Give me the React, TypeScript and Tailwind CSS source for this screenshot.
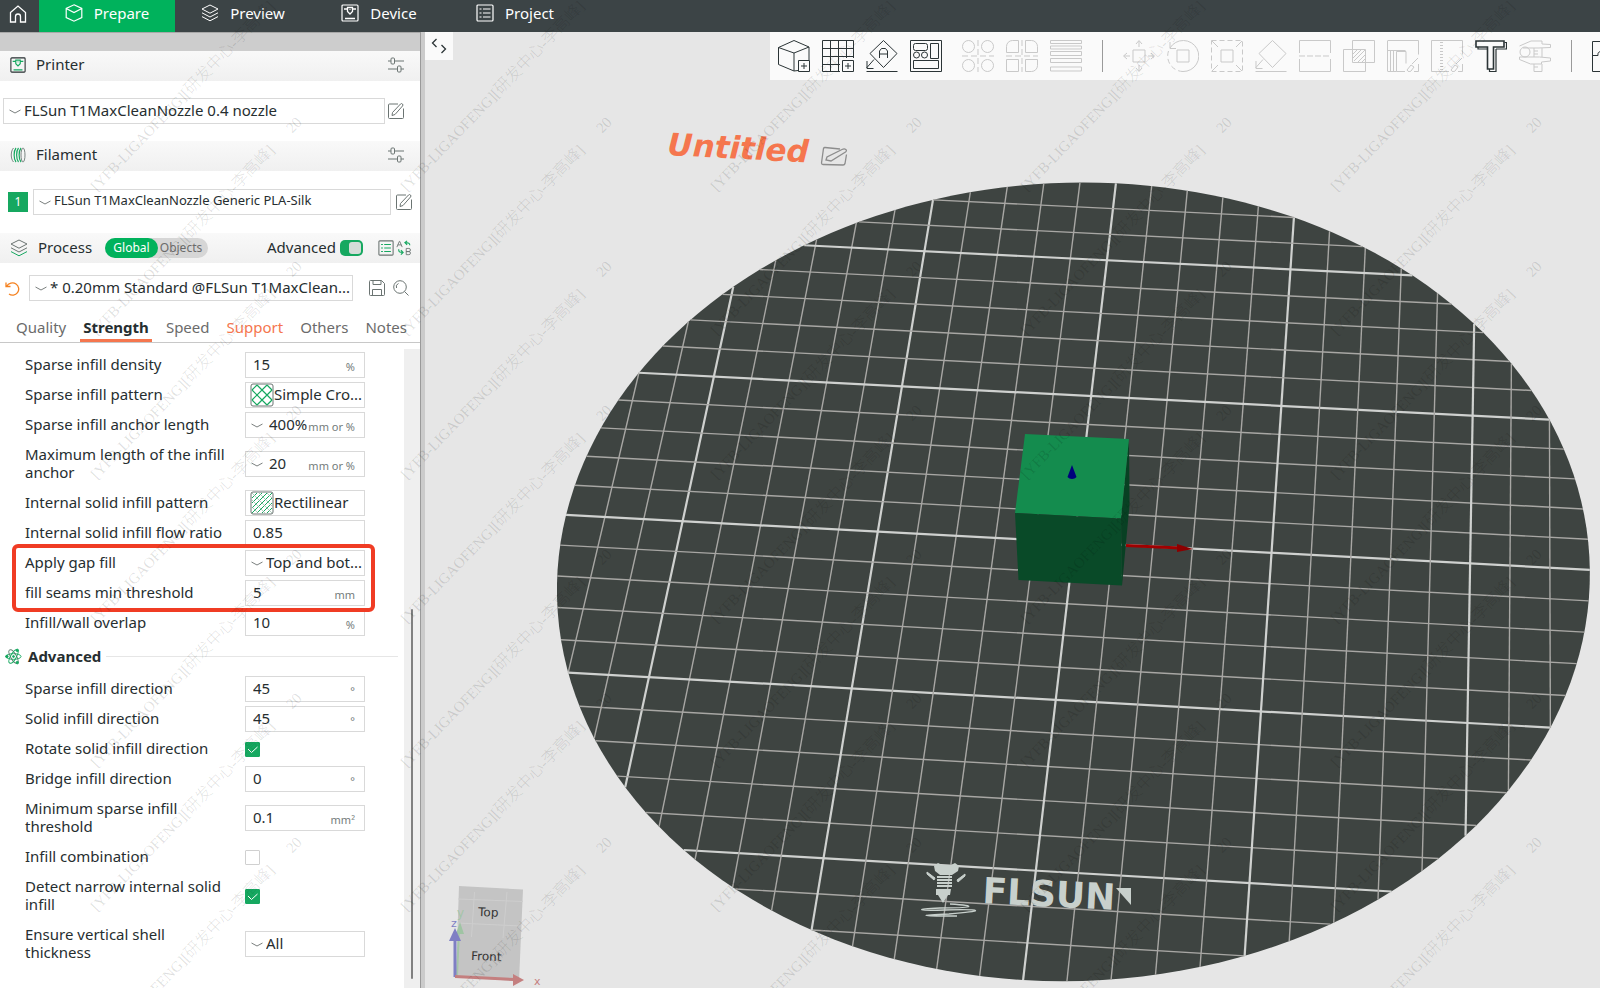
import { useState } from "react";
import type { ReactNode } from "react";

type IconProps = { size?: number; box?: number; className?: string; children: ReactNode };

function Icon({ size = 18, box = 18, className = "", children }: IconProps) {
  return (
    <svg
      width={size}
      height={size}
      viewBox={`0 0 ${box} ${box}`}
      fill="none"
      stroke="currentColor"
      aria-hidden="true"
      className={`shrink-0 ${className}`}
    >
      {children}
    </svg>
  );
}

function HomeIcon() {
  return (
    <Icon>
      <path d="M1.5 7.5 9 1l7.500 6.500V17h-5v-5.500a2.500 2.500 0 0 0-5 0V17h-5z" strokeWidth="1.300" />
    </Icon>
  );
}

function CubeIcon() {
  return (
    <Icon>
      <path d="M9 .8 16.800 4.500v9L9 17.200 1.200 13.500v-9zM1.200 4.500 9 8.500l7.800-4" strokeWidth="1.200" />
    </Icon>
  );
}

function LayersIcon({ accent = "currentColor" }: { accent?: string }) {
  return (
    <Icon>
      <path d="M9 1 17 5 9 9.200 1 5z" />
      <path d="m1 8.800 8 4.200 8-4.200" />
      <path d="m1 12.600 8 4.200 8-4.200" stroke={accent} />
    </Icon>
  );
}

function PrinterIcon({ accent = "currentColor", size = 18 }: { accent?: string; size?: number }) {
  return (
    <Icon size={size}>
      <rect x="1" y="1" width="16" height="16" rx="1" strokeWidth="1.200" />
      <path d="M3 5h3.500M11.500 5H15M6.500 3.500h5v4L9 10 6.500 7.500zM4 14.500h10" stroke={accent} strokeWidth="1.300" />
      <path d="M8.500 5.500h1" stroke={accent} />
    </Icon>
  );
}

function ListIcon({ accent = "currentColor", size = 18 }: { accent?: string; size?: number }) {
  return (
    <Icon size={size}>
      <rect x="1" y="1" width="16" height="16" rx="1" strokeWidth="1.200" />
      <path d="M3.500 5h2M3.500 9h2M3.500 13h2M7 5h7.500M7 9h7.500M7 13h7.500" stroke={accent} strokeWidth="1.200" />
    </Icon>
  );
}

function FilamentIcon() {
  return (
    <Icon size={16} box={16}>
      <path d="M3.500 1C.5 4 .5 12 3.500 15" stroke="#7a8582" />
      <path d="M6 1c-2.500 3-2.500 11 0 14M8.500 1C6 4 6 12 8.500 15M11 1c-2.500 3-2.500 11 0 14" stroke="#16a860" strokeWidth="1.200" />
      <ellipse cx="13" cy="8" rx="2" ry="7" stroke="#7a8582" />
    </Icon>
  );
}

function SlidersIcon() {
  return (
    <Icon size={16} box={16} className="text-[#6b7472]">
      <path d="M0 4h3M6.500 4H16M0 12h9.500M13 12h3" />
      <rect x="3" y="1" width="3.500" height="6" rx="1" />
      <rect x="9.500" y="9" width="3.500" height="6" rx="1" />
    </Icon>
  );
}

function EditIcon() {
  return (
    <Icon size={16} box={16} className="text-[#6b7472]">
      <path d="M10 1H1.500a1 1 0 0 0-1 1v12.500a1 1 0 0 0 1 1h13a1 1 0 0 0 1-1V5.500" />
      <path d="m4.500 9.500 8-8.500a1.400 1.400 0 0 1 2 2L7 11.500l-3 1z" />
    </Icon>
  );
}

function Chevron() {
  return (
    <svg width="12" height="5" viewBox="0 0 12 5" fill="none" stroke="#7a7f7e" aria-hidden="true" className="pointer-events-none shrink-0">
      <path d="M.5 1 6 4l5.500-3" />
    </svg>
  );
}

function NavTab({ icon, label, active = false }: { icon: ReactNode; label: string; active?: boolean }) {
  return (
    <button
      className={`flex w-[136px] items-center justify-center gap-[11px] pb-1.5 text-[15px] leading-5 text-white ${
        active ? "bg-[#00b25c]" : ""
      }`}
    >
      {icon}
      {label}
    </button>
  );
}

function TopBar() {
  return (
    <header className="flex h-8 bg-[#3c4446]">
      <button aria-label="Home" className="flex w-[39px] items-center justify-center pr-1 pb-1 text-white">
        <HomeIcon />
      </button>
      <NavTab icon={<CubeIcon />} label="Prepare" active />
      <NavTab icon={<LayersIcon />} label="Preview" />
      <NavTab icon={<PrinterIcon />} label="Device" />
      <NavTab icon={<ListIcon />} label="Project" />
    </header>
  );
}

function SectionHeader({ icon, title, children }: { icon: ReactNode; title: string; children: ReactNode }) {
  return (
    <div className="flex h-[30px] items-center bg-gradient-to-b from-[#f9f9f9] to-[#f0f0f0] pr-4 pb-0.5 pl-2">
      <span className="flex w-5 justify-center">{icon}</span>
      <h2 className="ml-2 flex-1 pb-0.5 text-[15px] leading-5">{title}</h2>
      {children}
    </div>
  );
}

type PickerProps = { label: string; value: string; className?: string; small?: boolean };

function PresetPicker({ label, value, className = "", small = false }: PickerProps) {
  return (
    <div className={`relative flex h-[26px] items-center border border-[#d9d9d9] bg-white ${className}`}>
      <span className="absolute left-[5px]">
        <Chevron />
      </span>
      <select aria-label={label} className={`h-full w-full appearance-none pb-0.5 pl-5 ${small ? "text-[13px]" : "text-[15px]"}`}>
        <option>{value}</option>
      </select>
    </div>
  );
}

function ModeToggle() {
  return (
    <div className="mr-[59px] flex h-5 rounded-full bg-[#d6d6d6] text-[12px] leading-5">
      <button className="w-[53px] rounded-full bg-[#00b25c] text-white">Global</button>
      <button className="w-[50px] pr-1 text-[#6b6b6b]">Objects</button>
    </div>
  );
}

function ProcessHeader() {
  const [advanced, setAdvanced] = useState(true);
  return (
    <div className="flex h-[30px] items-center bg-gradient-to-b from-[#f9f9f9] to-[#f0f0f0] pr-2 pl-[10px]">
      <span className="text-[#6b7472]">
        <LayersIcon accent="#16a860" />
      </span>
      <h2 className="ml-[10px] w-[67px] pb-0.5 text-[15px] leading-5">Process</h2>
      <ModeToggle />
      <label htmlFor="advanced" className="pb-0.5 text-[15px] leading-5">
        Advanced
      </label>
      <span className="relative ml-1 flex">
        <input
          id="advanced"
          type="checkbox"
          role="switch"
          checked={advanced}
          onChange={() => setAdvanced(!advanced)}
          className="peer h-4 w-[23px] appearance-none rounded-[5px] bg-gray-400 checked:bg-[#16a860]"
        />
        <span className="pointer-events-none absolute top-0.5 left-0.5 h-3 w-3 rounded-[3px] bg-[#d5dcd8] peer-checked:left-[9px]" />
      </span>
      <button aria-label="Compare presets" className="ml-auto text-[#6b7472]">
        <ListIcon accent="#16a860" size={16} />
      </button>
      <button aria-label="Swap presets" className="ml-0.5 text-[#6b7472]">
        <Icon size={16}>
          <path d="M1 8 3.800 1.500h.4L7 8M2 5.500h4M11.500 9.500v7h3a1.700 1.700 0 0 0 0-3.500h-3 3a1.700 1.700 0 0 0 0-3.500z" />
          <path d="M15.500 6c0-2-1-3-5-3M12.500 1l-2.500 2 2.500 2.500M3 10.500c0 3 1 3.500 4.500 3.500M5.500 11.500 8 14l-2.500 2.500" stroke="#16a860" strokeWidth="1.300" />
        </Icon>
      </button>
    </div>
  );
}

const tabs = ["Quality", "Strength", "Speed", "Support", "Others", "Notes"];

function SettingTabs() {
  const [current, setCurrent] = useState("Strength");
  return (
    <nav className="flex h-[42px] items-end justify-between border-b border-[#c8c8c8] pr-[10px] pl-[13px] text-[15px] leading-5">
      {tabs.map((tab) => {
        let color = "border-transparent text-[#6b6b6b]";
        if (tab === "Support") color = "border-transparent text-[#f5764e]";
        if (tab === current) color = "border-[#f5764e] font-bold text-[#262e30]";
        return (
          <button key={tab} onClick={() => setCurrent(tab)} className={`border-b-[3px] px-[3px] pb-[2px] ${color}`}>
            {tab}
          </button>
        );
      })}
    </nav>
  );
}

function CrossHatch({ dense = false }: { dense?: boolean }) {
  return (
    <Icon size={24} box={24} className="pointer-events-none absolute left-1">
      <rect x="1" y="1" width="22" height="22" rx="2" fill="#fff" stroke="#6b7472" />
      {dense ? (
        <>
          <path d="M2 7l5-5M2 12 12 2M2 17 17 2M2 22 22 2M7 22 22 7M12 22l10-10M17 22l5-5" stroke="#16a860" />
          <path d="M17 2l5 5M9 2l13 13M2 2l20 20M2 9l13 13M2 16l6 6" stroke="#8fb5a2" strokeWidth=".7" />
        </>
      ) : (
        <path
          d="M2 7l5-5M2 17 17 2M7 22 22 7M17 22l5-5M17 2l5 5M7 2l15 15M2 7l15 15M2 17l5 5"
          stroke="#16a860"
          strokeWidth="1.200"
        />
      )}
    </Icon>
  );
}

type Setting = {
  label: string;
  kind: "text" | "combo" | "select" | "pattern" | "check";
  value?: string;
  unit?: string;
  dense?: boolean;
  checked?: boolean;
};

function SettingControl({ id, setting }: { id: string; setting: Setting }) {
  const { kind, value, unit, dense } = setting;
  if (kind === "check") {
    return (
      <span className="relative flex">
        <input
          id={id}
          type="checkbox"
          defaultChecked={setting.checked}
          className="peer h-[15px] w-[15px] appearance-none rounded-[1px] border border-[#d0d0d0] bg-white checked:border-[#16a860] checked:bg-[#16a860]"
        />
        <svg width="15" height="15" viewBox="0 0 15 15" fill="none" stroke="#fff" className="pointer-events-none absolute hidden peer-checked:block">
          <path d="m3 7 3.500 3.500L12.500 5" />
        </svg>
      </span>
    );
  }
  return (
    <span className="relative flex h-[26px] w-[120px] items-center border border-[#d9d9d9] bg-white">
      {(kind === "select" || kind === "combo") && (
        <span className="absolute left-[5px]">
          <Chevron />
        </span>
      )}
      {kind === "pattern" && <CrossHatch dense={dense} />}
      {kind === "text" && <input id={id} defaultValue={value} className="w-full min-w-0 pb-0.5 pl-[7px] outline-none" />}
      {kind === "combo" && <input id={id} defaultValue={value} className="w-full min-w-0 pb-0.5 pl-[23px] outline-none" />}
      {kind === "select" && (
        <select id={id} className="w-full appearance-none pb-0.5 pl-5">
          <option>{value}</option>
        </select>
      )}
      {kind === "pattern" && (
        <select id={id} className="w-full appearance-none pb-0.5 pl-7">
          <option>{value}</option>
        </select>
      )}
      {unit && <span className="pointer-events-none absolute right-[9px] bottom-0 text-[11px] leading-5 text-[#747c7b]">{unit}</span>}
    </span>
  );
}

function SettingRow({ setting }: { setting: Setting }) {
  const id = setting.label.toLowerCase().replace(/[^a-z]+/g, "-");
  return (
    <div className="flex min-h-[26px] items-center pl-[25px]">
      <label htmlFor={id} className="mr-3 w-52 pb-0.5 leading-[18px]">
        {setting.label}
      </label>
      <SettingControl id={id} setting={setting} />
    </div>
  );
}

function TallRow({ setting }: { setting: Setting }) {
  return (
    <div className="py-[3px]">
      <SettingRow setting={setting} />
    </div>
  );
}

const infillTop: Setting[] = [
  { label: "Sparse infill density", kind: "text", value: "15", unit: "%" },
  { label: "Sparse infill pattern", kind: "pattern", value: "Simple Cro..." },
  { label: "Sparse infill anchor length", kind: "combo", value: "400%", unit: "mm or %" },
];

const gapFill: Setting[] = [
  { label: "Apply gap fill", kind: "select", value: "Top and bot..." },
  { label: "fill seams min threshold", kind: "text", value: "5", unit: "mm" },
];

const directions: Setting[] = [
  { label: "Sparse infill direction", kind: "text", value: "45", unit: "°" },
  { label: "Solid infill direction", kind: "text", value: "45", unit: "°" },
  { label: "Rotate solid infill direction", kind: "check", checked: true },
  { label: "Bridge infill direction", kind: "text", value: "0", unit: "°" },
];

function SettingsList() {
  return (
    <div className="flex flex-1 flex-col gap-1 pt-[9px] text-[15px]">
      {infillTop.map((s) => (
        <SettingRow key={s.label} setting={s} />
      ))}
      <TallRow setting={{ label: "Maximum length of the infill anchor", kind: "combo", value: "20", unit: "mm or %" }} />
      <SettingRow setting={{ label: "Internal solid infill pattern", kind: "pattern", value: "Rectilinear", dense: true }} />
      <SettingRow setting={{ label: "Internal solid infill flow ratio", kind: "text", value: "0.85" }} />
      <div className="relative z-10 flex flex-col gap-1">
        {gapFill.map((s) => (
          <SettingRow key={s.label} setting={s} />
        ))}
        <div className="pointer-events-none absolute -inset-y-1.5 right-[29px] left-3 rounded-md border-4 border-[#f03c24]" />
      </div>
      <SettingRow setting={{ label: "Infill/wall overlap", kind: "text", value: "10", unit: "%" }} />

      <div className="flex h-8 items-center pr-[6px] pl-[5px]">
        <Icon size={17} className="text-[#16a860]">
          <ellipse cx="9" cy="9" rx="8" ry="3" />
          <ellipse cx="9" cy="9" rx="8" ry="3" transform="rotate(60 9 9)" stroke="#5f7a6d" />
          <ellipse cx="9" cy="9" rx="8" ry="3" transform="rotate(120 9 9)" />
          <circle cx="9" cy="9" r="1" fill="currentColor" />
          <circle cx="2" cy="9" r="1.300" fill="currentColor" />
          <circle cx="13" cy="2.500" r="1.300" fill="currentColor" />
          <circle cx="13" cy="15.500" r="1.300" fill="currentColor" />
        </Icon>
        <h3 className="ml-[6px] font-bold leading-5">Advanced</h3>
        <span className="ml-[5px] h-px flex-1 bg-[#e6e6e6]" />
      </div>

      {directions.map((s) => (
        <SettingRow key={s.label} setting={s} />
      ))}
      <TallRow setting={{ label: "Minimum sparse infill threshold", kind: "text", value: "0.1", unit: "mm²" }} />
      <SettingRow setting={{ label: "Infill combination", kind: "check" }} />
      <TallRow setting={{ label: "Detect narrow internal solid infill", kind: "check", checked: true }} />
      <TallRow setting={{ label: "Ensure vertical shell thickness", kind: "select", value: "All" }} />
    </div>
  );
}

function Sidebar() {
  return (
    <aside className="flex w-[425px] shrink-0 flex-col border-r-4 border-[#cbcbcb] bg-white text-[#262e30]">
      <div className="flex flex-1 flex-col border-r border-[#9a9a9a]">
        <div className="h-[19px] border-t border-[#a8a8a8] bg-[#cdcdcd]" />

        <SectionHeader icon={<PrinterIcon accent="#16a860" size={16} />} title="Printer">
          <button aria-label="Printer settings">
            <SlidersIcon />
          </button>
        </SectionHeader>
        <div className="flex items-center gap-[3px] py-[17px] pr-4 pl-[3px] text-[#6b7472]">
          <PresetPicker label="Printer preset" value="FLSun T1MaxCleanNozzle 0.4 nozzle" className="flex-1 text-[#262e30]" />
          <button aria-label="Edit printer">
            <EditIcon />
          </button>
        </div>

        <SectionHeader icon={<FilamentIcon />} title="Filament">
          <button aria-label="Filament settings">
            <SlidersIcon />
          </button>
        </SectionHeader>
        <div className="flex items-center gap-[5px] py-[18px] pr-2 pl-2">
          <button className="h-5 w-5 bg-[#16a860] text-[12px] leading-5 text-white">1</button>
          <PresetPicker label="Filament preset" value="FLSun T1MaxCleanNozzle Generic PLA-Silk" className="flex-1" small />
          <button aria-label="Edit filament">
            <EditIcon />
          </button>
        </div>

        <ProcessHeader />
        <div className="flex items-center pt-3 pr-[11px] pl-[5px]">
          <button aria-label="Reset" className="mr-[9px] text-[#f58220]">
            <Icon size={15} box={15}>
              <path d="M1 1.500v4h4.500M1.500 5.500C3.500 2 8 1 11 3s3.500 6 1.500 8.700-6 3.100-8.500 1.300" strokeWidth="1.300" />
            </Icon>
          </button>
          <PresetPicker label="Process preset" value="* 0.20mm Standard @FLSun T1MaxClean..." className="flex-1" />
          <button aria-label="Save preset" className="ml-4 text-[#6b7472]">
            <Icon size={16} box={16}>
              <path d="M.5 1.500a1 1 0 0 1 1-1h11l3 3v11a1 1 0 0 1-1 1h-13a1 1 0 0 1-1-1zM4 .5v4h8v-4M3.500 15.500v-6h9v6" />
            </Icon>
          </button>
          <button aria-label="Search settings" className="ml-[8px] text-[#6b7472]">
            <Icon size={16} box={16}>
              <circle cx="7" cy="7" r="6.300" />
              <path d="m11.500 11.500 4 4M3.500 8a3.500 3.500 0 0 1 2-4.500" />
            </Icon>
          </button>
        </div>
        <SettingTabs />

        <div className="flex flex-1">
          <SettingsList />
          <div className="mt-[6px] flex w-4 flex-col items-center bg-[#efefef]">
            <div className="flex-[260]" />
            <div className="w-0.5 flex-[370] rounded-full bg-[#808080]" />
            <div className="flex-[9]" />
          </div>
        </div>
      </div>
    </aside>
  );
}

const BED_RADIUS = 130;

// bed millimetres to canvas units, camera tilted towards the front edge
function project(x: number, y: number) {
  const w = 1 - 0.000058 * x + 0.000762 * y;
  return [(3.875 * x + 1.172 * y + 1074.1) / w, (0.18 * x - 2.621 * y + 542.2) / w];
}

const rim = Array.from({ length: 180 }, (_, i) => {
  const a = (i * Math.PI) / 90;
  return project(BED_RADIUS * Math.cos(a), BED_RADIUS * Math.sin(a)).join(",");
}).join(" ");

const steps = Array.from({ length: 25 }, (_, i) => (i - 12) * 10);

function BedGrid() {
  return (
    <>
      {steps.map((s) => {
        const half = Math.sqrt(BED_RADIUS * BED_RADIUS - s * s);
        const bold = s % 50 === 0;
        const [ax, ay] = project(s, -half);
        const [bx, by] = project(s, half);
        const [cx, cy] = project(-half, s);
        const [dx, dy] = project(half, s);
        return (
          <g key={s} stroke={bold ? "#cfd1cf" : "#a8a7a4"} strokeWidth={bold ? 2.2 : 1.4}>
            <line x1={ax} y1={ay} x2={bx} y2={by} />
            <line x1={cx} y1={cy} x2={dx} y2={dy} />
          </g>
        );
      })}
    </>
  );
}

function BedLogo() {
  return (
    <g fill="#c8d0cc">
      <path d="M934 866l4-3 4 2h9l4-2 4 3-1 5-6 4h-12l-5-4z" />
      <path d="M927 872l8 6-1 2-7-6zM965 874l-8 6 1 2 7-6z" stroke="#c8d0cc" />
      <path d="M937 877h15M937 880h15M937 883h15M937 886h15" stroke="#c8d0cc" strokeWidth="1.800" />
      <path d="M936 889h15l-1 6h-2l-5 8-5-8h-2z" />
      <path d="M950 904c30 2 22 4-10 4-28 1-22 3 5 2 40-1 40 1 4 4-32 1-28 2-4 2h12" fill="none" stroke="#c8d0cc" strokeWidth="1.300" />
      <text x="982" y="903" transform="rotate(3 982 903)" fontFamily="DejaVu Sans" fontWeight="bold" fontSize="36">
        FLSUN
      </text>
      <path d="M1116 888h15v17z" />
    </g>
  );
}

function ViewCube() {
  return (
    <g>
      <path d="M459 886l64 3.500-4 92-63-5z" fill="#c4c4c4" />
      <path d="M458 899l65 2.500M457 923l64 3M474.500 892l-3 45M507 892l-4 46" stroke="#cecece" fill="none" />
      <text x="478" y="916" fontFamily="DejaVu Sans" fontSize="12" fill="#333" transform="rotate(2 478 916)">
        Top
      </text>
      <text x="471" y="960" fontFamily="DejaVu Sans" fontSize="12" fill="#333" transform="rotate(2 471 960)">
        Front
      </text>
      <path d="M457 976l2-46" stroke="#a5c5a8" strokeWidth="2" />
      <path d="M460 922l4 12h-8z" fill="#9fc4a3" />
      <text x="457" y="917" fontFamily="DejaVu Sans" fontSize="12" fill="#a5c5a8">
        y
      </text>
      <path d="M455 977v-38" stroke="#7f7fc4" strokeWidth="3" />
      <path d="M455 928l6 13h-12z" fill="#7f7fc4" />
      <text x="451" y="927" fontFamily="DejaVu Sans" fontSize="11" fill="#7f7fc4">
        z
      </text>
      <path d="M455 976.500l60 3" stroke="#c47f7f" strokeWidth="3" />
      <path d="M524 980l-11-6v12z" fill="#c47f7f" />
      <text x="534" y="985" fontFamily="DejaVu Sans" fontSize="11" fill="#c47f7f">
        x
      </text>
    </g>
  );
}

function Scene() {
  return (
    <svg viewBox="425 32 1175 956" preserveAspectRatio="xMidYMid slice" className="absolute inset-0 h-full w-full">
      <polygon points={rim} fill="#3e4441" />
      <BedGrid />
      <BedLogo />

      <path d="M1121 518.500 1129 439l.5 66-7.500 80.500z" fill="#084023" />
      <path d="M1025 434l104 5-8 79.500-106-5.500z" fill="#148c4e" />
      <path d="M1015 513l106 5.500 1 67-103.500-5.500z" fill="#094a28" />
      <path d="M1126 545.500l54 2.500" stroke="#a00000" strokeWidth="3" />
      <path d="M1193 549l-16-5v8z" fill="#8c0000" />
      <path d="M1072 465l4.500 12c-2 2.500-7 2.500-9 0z" fill="#00007c" />

      <text x="667" y="155" transform="rotate(3 667 155)" fontFamily="DejaVu Sans" fontWeight="bold" fontStyle="italic" fontSize="31" fill="#f5764e">
        Untitled
      </text>
      <g fill="none" stroke="#8d8d8d" strokeWidth="1.300">
        <path d="M840 149l-15-1.500a1.500 1.500 0 0 0-1.500 1L821.500 163a1.500 1.500 0 0 0 1.500 1.500l20 .5a2 2 0 0 0 2-1.500l1.500-9" />
        <path d="M826 160l1-3 15-7.500c3-1.500 6 .5 3.500 2.500L831 161z" />
      </g>
      <ViewCube />
    </svg>
  );
}

function Tool({ label, muted = true, children }: { label: string; muted?: boolean; children: ReactNode }) {
  return (
    <button aria-label={label} className={`shrink-0 ${muted ? "text-[#c9c9c9]" : "text-[#2b3436]"}`}>
      <Icon size={32} box={32}>
        {children}
      </Icon>
    </button>
  );
}

function Toolbar() {
  return (
    <div className="ml-[317px] flex h-12 flex-1 items-center gap-3 overflow-hidden bg-[#fafafa] pl-2">
      <Tool label="Add" muted={false}>
        <path d="M20 30.500 16 31 .5 24.500V7.500L16 .5l15 6.500v13M.5 7.500 16 13l15-6M16 13v18" />
        <path d="M20.500 20.500h11v11h-11zM26 23v6M23 26h6" />
      </Tool>
      <Tool label="Add plate" muted={false}>
        <path d="M18 31.500H.5v-31h31V18M8.500 1v30M16.500 1v30M24.500 1v17M1 8.500h30M1 16.500h30M1 24.500h17" />
        <path d="M20.500 20.500h11v11h-11zM26 23v6M23 26h6" />
      </Tool>
      <Tool label="Auto orient" muted={false}>
        <path d="M17.500.5 31 13.500l-13.500 14L4 13.500zM.5 31.500h31M8 19.500.5 28M1 21v7.500h6.500M13.500 18v-7l2-2.500h4l2 2.500v7M13.500 14h8" />
      </Tool>
      <Tool label="Arrange" muted={false}>
        <path d="M.5.5h31v31H.500z" />
        <rect x="3.500" y="3.500" width="14" height="7" rx="2" />
        <path d="M20.500 3.500h8v15h-8zM3.500 20.500h25v8h-25z" />
        <circle cx="6.500" cy="15" r="3" />
        <circle cx="14.500" cy="15" r="3" />
      </Tool>
      <span className="-ml-1" />
      <Tool label="Split to objects">
        <circle cx="6.500" cy="6.500" r="6" />
        <circle cx="25.500" cy="6.500" r="6" />
        <circle cx="6.500" cy="25.500" r="6" />
        <circle cx="25.500" cy="25.500" r="6" />
        <path d="M16 0v32M0 16h32" strokeDasharray="6 3" />
      </Tool>
      <Tool label="Split to parts">
        <path d="M12.500.5v12H.500V6.500a6 6 0 0 1 6-6zM19.500.500v12h12V6.500a6 6 0 0 0-6-6zM12.500 31.500v-12H.500v12zM19.500 31.500v-12h12v6a6 6 0 0 1-6 6z" />
        <path d="M16 0v32M0 16h32" strokeDasharray="6 3" />
      </Tool>
      <Tool label="Variable layer height">
        <path d="M.5.5h31v3H.500zM.5 6h31v3H.500zM.5 11.500h31v4H.500zM.5 18.500h31v4H.500zM.5 27h31v4H.500z" />
      </Tool>
      <span className="mx-2 h-8 w-px shrink-0 bg-[#9a9a9a]" />
      <Tool label="Move">
        <path d="M10 10h12v12H10zM16 7V1M13 4l3-3.500L19 4M16 25v6M13 28l3 3.500 3-3.500M7 16H1M4 13 .5 16 4 19M25 16h6M28 13l3.500 3-3.500 3" />
      </Tool>
      <Tool label="Rotate">
        <path d="M10 10h12v12H10zM3 8a15.500 15.500 0 1 1 13 23.500M3 2v6.500h6" />
        <path d="M16 31.500A15.500 15.500 0 0 1 1.500 11" strokeDasharray="5 3" />
      </Tool>
      <Tool label="Scale">
        <path d="M10 10h12v12H10zM1 1l6 6M31 1l-6 6M1 31l6-6M31 31l-6-6" />
        <path d="M.5.5h31v31H.500z" strokeDasharray="5 3" />
      </Tool>
      <Tool label="Lay on face">
        <path d="M17.500.500 31 13.500l-13.500 14L4 13.500zM.5 31.500h31M8 19.500.5 28M1 21v7.500h6.500" />
      </Tool>
      <Tool label="Cut">
        <path d="M.5 13V.500h31V13M.5 19v12.500h31V19" />
        <path d="M0 16h32" strokeDasharray="6 2" />
      </Tool>
      <Tool label="Boolean">
        <path d="M9.500.500h22v22h-22zM.5 9.500h22v22H.500zM10 14l4-4M10 18l8-8M11 21l11-11M15 22l7-7M19 22l3-3" />
      </Tool>
      <Tool label="Support painting">
        <path d="M18 31.500H9.500V11.500h9.500v12M.5 31.500h9M.5.500h31v14M.5 1v30M.5 10.500h18M3.500 11v20M6.500 11v20M20 30l4-5 3 2-3 4c-1 1-3 1-4-1zM25 24l6-6M31.500 24v7.500H27" />
      </Tool>
      <Tool label="Seam painting">
        <path d="M18 31.500H.500V.500h31v14M20 30l4-5 3 2-3 4c-1 1-3 1-4-1zM25 24l6-6M31.500 24v7.500H27" />
        <path d="M10.500 2v28" strokeWidth="3" strokeDasharray="1 2" />
      </Tool>
      <Tool label="Text" muted={false}>
        <path d="M1 1h28v6h-10.500v22h-6V7H1z" strokeWidth="1.600" />
        <path d="M29.500 2.500h2V9h-10.500M21 9v22.500h-6.500v-2.500M3 7v2h9" strokeWidth="1.200" />
      </Tool>
      <Tool label="Measure">
        <circle cx="6" cy="12" r="5" />
        <path d="M.5 6 12 1h11v3l8.500.500v3L19 8H4M.5 17h20l11 1v3l-9 1v2h-11L.500 19.500zM15 8v9M23 8v9M15 24v7.500h8V24M15 11h4M15 14h4M15 27h4" />
      </Tool>
      <span className="mx-2 h-8 w-px shrink-0 bg-[#9a9a9a]" />
      <Tool label="Assembly" muted={false}>
        <path d="M12 31.500H.500V1.500h31v30H12M.5 15.500H6c-1-5 5-5 4 0h4v16" />
      </Tool>
    </div>
  );
}

// staggered 5 x 7 grid of diagonal marks
const marks = Array.from({ length: 35 }, (_, i) => ({
  x: 97 + (i % 5) * 310,
  y: 192 + Math.floor(i / 5) * 144,
}));

function Watermark() {
  return (
    <svg
      aria-hidden="true"
      className="pointer-events-none absolute inset-0 z-20 h-full w-full"
      fill="#000"
      fillOpacity=".13"
      fontFamily="'Liberation Serif', 'Noto Sans CJK SC', serif"
    >
      {marks.map(({ x, y }) => (
        <text key={`${x}-${y}`} x={x} y={y} transform={`rotate(-46 ${x} ${y})`} fontSize="15">
          [YFB-LIGAOFENG][
          <tspan fontSize="16" fontWeight="300">
            研发中心
          </tspan>
          -
          <tspan fontSize="16" fontWeight="300">
            李高峰
          </tspan>
          ]<tspan dx="24">20</tspan>
        </text>
      ))}
    </svg>
  );
}

export default function App() {
  return (
    <div className="relative flex min-h-screen flex-col overflow-hidden bg-[#e6e6e6] font-['Noto_Sans','Noto_Sans_CJK_SC',sans-serif]">
      <TopBar />
      <div className="flex flex-1">
        <Sidebar />
        <main className="relative flex min-w-0 flex-1 items-start">
          <Scene />
          <div className="relative flex min-w-0 flex-1 items-start">
            <button aria-label="Collapse sidebar" className="flex h-7 w-7 shrink-0 items-center justify-center bg-[#fafafa] text-[#2b3436]">
              <Icon size={16} box={16}>
                <path d="M5.500 1 1.500 5l4 4M10.500 7l4 4-4 4" strokeWidth="1.300" />
              </Icon>
            </button>
            <Toolbar />
          </div>
        </main>
      </div>
      <Watermark />
    </div>
  );
}
